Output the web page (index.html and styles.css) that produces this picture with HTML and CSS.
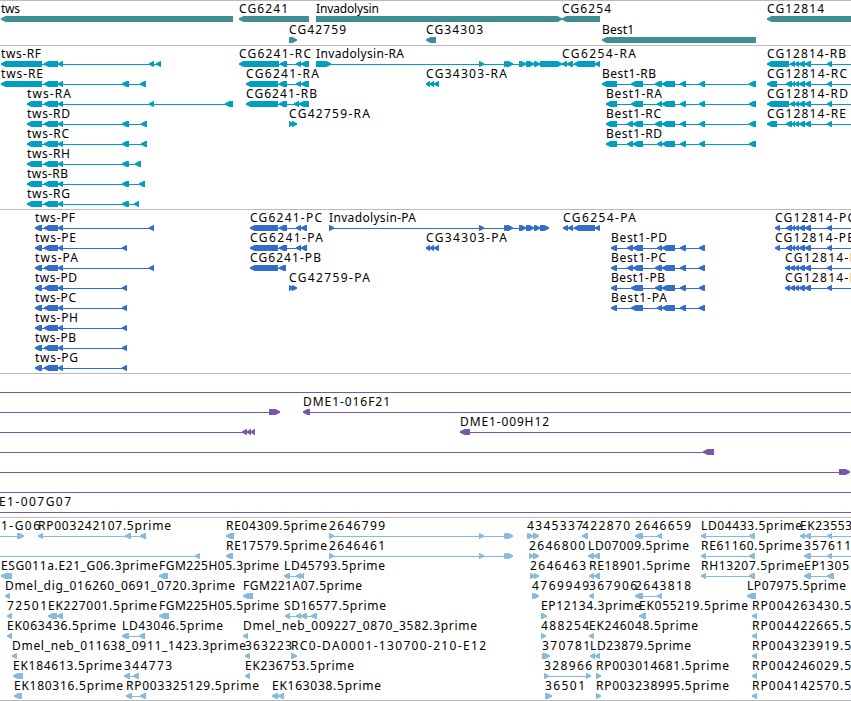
FILE: index.html
```html
<!DOCTYPE html>
<html lang="en">
<head>
    <meta charset="UTF-8">
    <meta name="viewport" content="width=device-width, initial-scale=1.0">
    <title>Genome tracks</title>
    <link rel="stylesheet" href="styles.css">
</head>
<body>
    <div class="browser">
        <section class="track genes" id="genes"></section>
        <section class="track transcripts" id="transcripts"></section>
        <section class="track proteins" id="proteins"></section>
        <section class="track clones" id="clones"></section>
        <section class="track ests" id="ests"></section>
    </div>

    <script src="tracks.js"></script>
</body>
</html>
```
FILE: styles.css
```css
body {
    margin: 0;
    background: #fff;
    overflow: hidden;
}
.browser {
    width: 851px;
    height: 700px;
    overflow: hidden;
    border-bottom: 1px solid #bbb;
}
.track {
    box-sizing: border-box;
    display: flex;
    flex-direction: column;
    border-top: 1px solid #bbb;
}
.row {
    display: block;
    flex: none;
    width: 851px;
    height: 20px;
    overflow: visible;
}
.genes {
    height: 45px;
    color: #408e94;
}
.genes .row {
    height: 21px;
}
.transcripts {
    height: 164px;
    color: #009fbf;
}
.proteins {
    height: 164px;
    color: #326dcc;
}
.clones {
    height: 144px;
    color: #7757a8;
}
.ests {
    height: 183px;
    color: #87bbdd;
}
.label {
    font-family: "Noto Sans", "Open Sans", sans-serif;
    font-size: 12px;
    fill: #000;
}
.exon {
    fill: currentColor;
}
.intron {
    fill: currentColor;
    shape-rendering: crispEdges;
}
```
FILE: tracks.js
```js
// One string per row, features separated by ";"
// feature: label | label start-end | strand | exons | optional line start-end
const tracks = {
    genes: [
        'tws|1-20|<|1-233;CG6241|239-288|<|239-309;Invadolysin|316-379|>|316-562;CG6254|562-611|<|562-600;CG12814|767-824|<|767-860',
        'CG42759|289-346|>|289-297;CG34303|426-483|<|426-436;Best1|602-634|<|602-756'
    ],
    transcripts: [
        'tws-RF|1-41|<|1-42,44-58,58-63,149-154,156-161;CG6241-RC|239-311|<|239-279,280-287,296-301,301-309;Invadolysin-RA|316-404|>|316-331,479-484,504-509,506-513,519-526,526-534,534-540,540-562;CG6254-RA|562-636|<|562-567,567-573,574-595,595-600;CG12814-RB|767-846|<|767-789,790-795,795-799,799-805,805-811,827-832|767-860',
        'tws-RE|1-43|<|1-42,44-58,58-63,122-129,140-146;CG6241-RA|246-319|<|246-278,279-287,296-301,301-309;CG34303-RA|426-507|<|426-430,430-434,434-439;Best1-RB|602-656|<|602-617,631-643,655-662,662-675,680-686,699-705,749-756;CG12814-RC|767-847|<|767-777,786-792,792-795,795-799,799-805,805-811,827-832|767-860',
        'tws-RA|27-71|<|27-42,44-58,58-63,149-154,225-233;CG6241-RB|246-317|<|246-278,279-287,294-299,299-309;Best1-RA|606-662|<|606-617,631-643,657-662,662-675,680-686,699-705,749-756;CG12814-RD|767-848|<|767-789,790-795,795-799,799-805,805-811,827-832|767-860',
        'tws-RD|27-70|<|27-42,44-58,58-63,122-129,141-147;CG42759-RA|289-370|>|289-293,292-297;Best1-RC|606-661|<|606-617,627-633,633-643,655-662,662-675,680-686,699-705,749-756;CG12814-RE|767-846|<|767-777,786-792,792-795,795-799,799-805,805-811,827-832|767-860',
        'tws-RC|27-69|<|27-42,44-58,58-63,122-129,141-147;Best1-RD|606-662|<|606-617,627-633,633-643,657-662,662-675,680-686,699-705,749-756',
        'tws-RH|27-70|<|27-42,44-58,58-63,122-129,135-141',
        'tws-RB|27-68|<|27-42,44-58,58-63,122-129,139-145',
        'tws-RG|27-70|<|27-42,44-58,58-63,122-129,134-139'
    ],
    proteins: [
        'tws-PF|35-75|<|35-42,44-58,58-63,149-154;CG6241-PC|250-322|<|250-278,279-287,296-301,301-307;Invadolysin-PA|329-416|>|329-334,479-484,504-509,506-513,519-526,526-534,534-540,540-549;CG6254-PA|563-636|<|563-568,568-573,574-595,595-600;CG12814-PC|775-855|<|775-780,786-792,792-795,795-799,799-805,805-811,827-832|775-860',
        'tws-PE|35-76|<|35-42,44-58,58-63,122-127;CG6241-PA|250-323|<|250-278,279-287,296-301,301-307;CG34303-PA|426-507|<|426-430,430-434,434-439;Best1-PD|611-667|<|611-617,627-633,633-643,657-662,662-675,680-686,699-705;CG12814-PE|775-854|<|775-780,786-792,792-795,795-799,799-805,805-811,827-832|775-860',
        'tws-PA|35-78|<|35-42,44-58,58-63,149-154;CG6241-PB|250-321|<|250-278,279-286;Best1-PC|611-666|<|611-617,627-633,633-643,655-662,662-675,680-686,699-705;CG12814-PB|785-866|<|785-790,790-795,795-799,799-805,805-811,827-832|785-860',
        'tws-PD|35-77|<|35-42,44-58,58-63,122-127;CG42759-PA|289-370|>|289-293,292-297;Best1-PB|611-665|<|611-617,631-643,655-662,662-675,680-686,699-705;CG12814-PD|785-867|<|785-790,790-795,795-799,799-805,805-811,827-832|785-860',
        'tws-PC|35-76|<|35-42,44-58,58-63,122-127;Best1-PA|611-667|<|611-617,631-643,657-662,662-675,680-686,699-705',
        'tws-PH|35-78|<|35-42,44-58,58-63,122-127',
        'tws-PB|35-76|<|35-42,44-58,58-63,122-127',
        'tws-PG|35-78|<|35-42,44-58,58-63,122-127'
    ],
    clones: [
        '|0-0|<||0-860',
        '|0-0|>|269-280|0-280;DME1-016F21|303-390|<|303-310|303-860',
        '|0-0|<|242-247,247-251,251-255|0-255;DME1-009H12|460-549|<|460-470|460-860',
        '|0-0|<|703-714|0-714',
        '|0-0|>|839-850|0-850',
        '|0-0|<||0-860',
        'E1-007G07|-1-71|<||0-860'
    ],
    ests: [
        '1-G06|1-40|>|17-24|0-24;RP003242107.5prime|38-171|<|38-43,125-131,140-146;RE04309.5prime|226-327|<|226-234;2646799|329-385|>|329-334,479-484,504-509,506-513;4345337|527-583|>|527-533,533-539;422870|582-630|<|582-588;2646659|635-691|<|635-643,657-662;LD04433.5prime|701-802|<|701-706,749-755;EK23553|800-852|<|800-805,805-811,827-832|800-860',
        '|0-0|<|195-200|0-200;RE17579.5prime|226-327|<|226-233;2646461|329-385|>|329-334,479-484,504-509,506-513;2646800|529-585|>|529-534,533-539;LD07009.5prime|588-689|<|588-594,594-600;RE61160.5prime|701-802|<|701-706,749-755;357611|804-851|<|804-811,827-832|804-860',
        'ESG011a.E21_G06.3prime|1-158|<|1-12;FGM225H05.3prime|159-279|<|159-168;LD45793.5prime|284-385|<|284-290,296-301,300-304;2646463|530-586|>|530-535,534-539;RE18901.5prime|589-690|<|589-594,594-600;RH13207.5prime|701-804|<|701-706,749-755;EP1305|804-849|<|804-811,827-834',
        'Dmel_dig_016260_0691_0720.3prime|5-235|<|5-10;FGM221A07.5prime|243-362|<|243-253;4769949|532-589|>|532-537,534-539;367906|589-637|<|589-594;2643818|635-691|<|635-643,657-662;LP07975.5prime|747-846|<|747-756',
        '72501|7-47|<|7-12;EK227001.5prime|48-157|<|48-57,57-63;FGM225H05.5prime|159-279|<|159-169;SD16577.5prime|284-386|<|285-290,296-301,301-307,311-317;EP12134.3prime|541-641|>|541-547;EK055219.5prime|639-748|<|639-646;RP004263430.5|752-851|<|752-757',
        'EK063436.5prime|7-116|<|7-12;LD43046.5prime|122-223|<|122-129,139-145;Dmel_neb_009227_0870_3582.3prime|243-477|<|243-248;488254|541-589|>|541-546;EK246048.5prime|589-698|<|589-594;RP004422665.5|752-851|<|752-757',
        'Dmel_neb_011638_0911_1423.3prime|12-246|<|12-17;363223|245-292|<|245-250;RC0-DA0001-130700-210-E12|291-486|>|291-297;370781|542-590|>|542-550;LD23879.5prime|590-691|<|590-595,595-600;RP004323919.5|752-851|<|752-757',
        'EK184613.5prime|13-122|<|13-23;344773|124-172|<|124-130,133-139;EK236753.5prime|245-354|<|245-250;328966|544-592|>|544-549,586-591;RP003014681.5prime|596-729|>|596-601;RP004246029.5|752-851|<|752-757',
        'EK180316.5prime|14-123|<|14-22;RP003325129.5prime|126-259|<|126-132,140-146;EK163038.5prime|272-381|<|272-278,278-284;36501|545-585|>|545-552;RP003238995.5prime|596-729|>|596-601;RP004142570.5|752-851|<|752-757'
    ]
};

const BASELINE = 12;
const TOP = 15;
const HEIGHT = 6;
const HEAD = 5;

function range(text) {
    const m = text.match(/^(-?\d+)-(\d+)$/);
    return [Number(m[1]), Number(m[2])];
}

// bar with a blunt head, two pixels high at the tip
function exon(a, b, strand) {
    const head = Math.min(HEAD, b - a) - 0.5;
    const mid = TOP + HEIGHT / 2;
    const bottom = TOP + HEIGHT;
    const [tip, tail, neck] = strand === '<' ? [a, b, a + head] : [b, a, b - head];
    return `<polygon class="exon" points="${tip},${mid - 0.8} ${neck},${TOP} ${tail},${TOP} ${tail},${bottom} ${neck},${bottom} ${tip},${mid + 0.8}"/>`;
}

function drawRow(row, lines) {
    let shapes = '';
    let labels = '';
    row.split(';').forEach(feature => {
        const [name, place, strand, exonText, lineText] = feature.split('|');
        const exons = exonText ? exonText.split(',').map(range) : [];
        if (lines) {
            const [from, to] = lineText ? range(lineText) : [exons[0][0], exons[exons.length - 1][1]];
            shapes += `<rect class="intron" x="${from}" y="${TOP + 3}" width="${to - from}" height="1"/>`;
        }
        shapes += exons.map(([a, b]) => exon(a, b, strand)).join('');
        if (name) {
            const [from, to] = range(place);
            labels += `<text class="label" x="${from}" y="${BASELINE}" textLength="${to - from}">${name}</text>`;
        }
    });
    return `<svg class="row">${shapes}${labels}</svg>`;
}

for (const id in tracks) {
    document.getElementById(id).innerHTML = tracks[id].map(row => drawRow(row, id !== 'genes')).join('');
}
```
